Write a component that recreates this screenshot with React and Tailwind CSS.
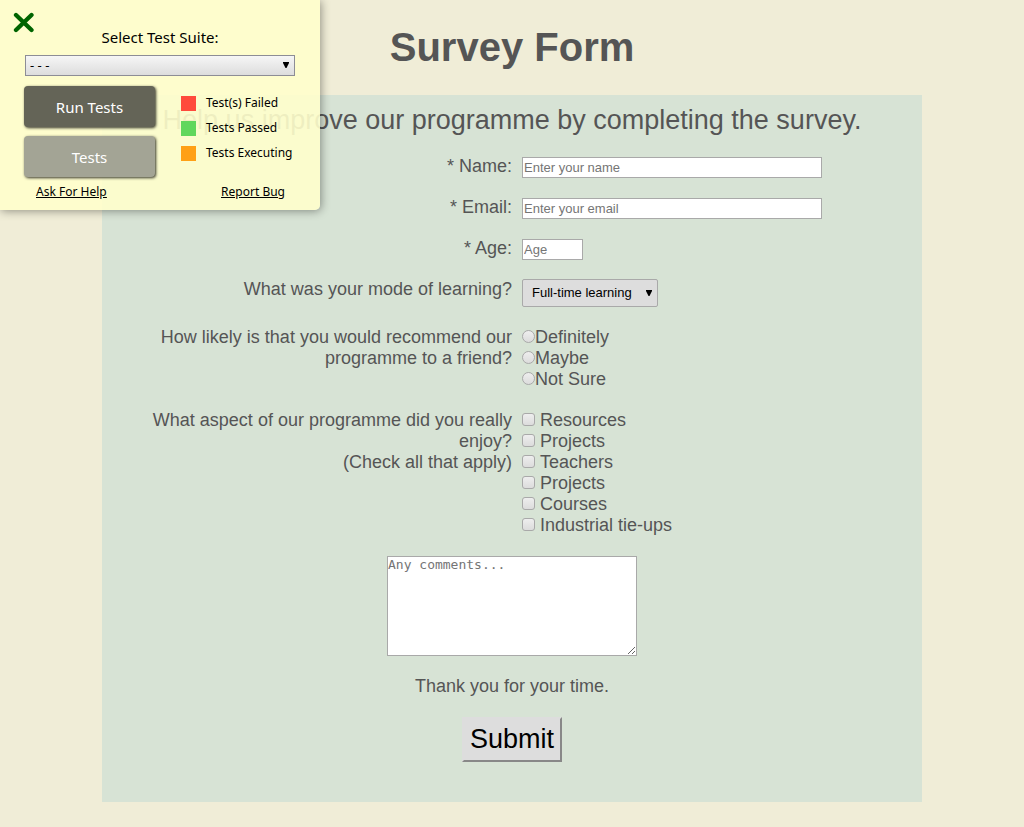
import React from "react";

const aspects = ["Resources", "Projects", "Teachers", "Projects", "Courses", "Industrial tie-ups"];
const likelihoods = ["Definitely", "Maybe", "Not Sure"];
const legend = [
  { label: "Test(s) Failed", color: "bg-[#ff4b3c]" },
  { label: "Tests Passed", color: "bg-[#60d75c]" },
  { label: "Tests Executing", color: "bg-[#ffa015]" },
];

function Arrow({ className }) {
  return (
    <svg viewBox="0 0 6 6" className={"pointer-events-none absolute h-[6px] w-[6px] " + className} aria-hidden="true">
      <path d="M0 0H6V1L3.5 6H2.5L0 1Z" fill="#000" />
    </svg>
  );
}

function Row({ children }) {
  return <div className="grid grid-cols-2 items-start">{children}</div>;
}

function TextRow({ id, label, type, placeholder, width }) {
  return (
    <Row>
      <label htmlFor={id} className="text-right">{label}</label>
      <div className="h-[21px] pl-[10px] pt-px">
        <input
          id={id}
          type={type}
          placeholder={placeholder}
          className={"block h-[21px] max-w-full border border-[#a9a9a9] bg-white px-px text-[13px] leading-4 placeholder:text-[#757575] " + width}
        />
      </div>
    </Row>
  );
}

function TestPanel() {
  return (
    <aside className="absolute left-0 top-0 h-[210px] w-[320px] rounded-br-[5px] bg-[#ffffcc]/90 font-['Noto_Sans',sans-serif] text-black shadow-[1px_1px_10px_rgba(0,0,0,0.4)]">
      <button type="button" aria-label="Close" className="absolute left-[13px] top-[12px]">
        <svg viewBox="0 0 21 21" className="h-[21px] w-[21px]" aria-hidden="true">
          <path d="M3 3L18.500 18M18.500 3L3 18" stroke="#006400" strokeWidth="4.300" strokeLinecap="round" fill="none" />
        </svg>
      </button>
      <div className="flex flex-col px-6 pt-[27px]">
        <label htmlFor="suite" className="text-center text-[15px] leading-[21px]">Select Test Suite:</label>
        <div className="relative mx-px mt-[7px]">
          <select id="suite" className="block h-[21px] w-full appearance-none border border-[#8d8d96] bg-linear-to-b from-[#f6f6f6] to-[#dddddd] px-1 text-[13px] leading-[19px]">
            <option>- - -</option>
          </select>
          <Arrow className="right-[6px] top-[7px]" />
        </div>
        <div className="mt-[10px] flex gap-[26px]">
          <div className="flex w-[131px] flex-col gap-[9px]">
            <button type="button" className="h-[41px] rounded-[4px] bg-[#646457] text-[15px] leading-5 text-white shadow-[1px_1px_3px_rgba(0,0,0,0.8)]">Run Tests</button>
            <button type="button" className="h-[41px] rounded-[4px] bg-[#a3a495] text-[15px] leading-5 text-white shadow-[1px_1px_3px_rgba(0,0,0,0.8)]">Tests</button>
          </div>
          <ul className="flex flex-col gap-[10px] pt-[10px]">
            {legend.map((item) => (
              <li key={item.label} className="flex items-start gap-[10px] whitespace-nowrap text-[12px] leading-[14px]">
                <span className={"h-[15px] w-[15px] " + item.color} />
                {item.label}
              </li>
            ))}
          </ul>
        </div>
        <div className="mt-[7px] flex justify-between pl-3 pr-[11px] text-[12px] leading-4 underline">
          <a href="#help">Ask For Help</a>
          <a href="#bug">Report Bug</a>
        </div>
      </div>
    </aside>
  );
}

export default function App() {
  return (
    <div className="relative min-h-screen bg-[#f0edd7] pb-[25px] pt-[24px] font-['Liberation_Sans',Arial,sans-serif] text-[18px] leading-[21px] text-[#555555]">
      <h1 className="text-center text-[40px] font-bold leading-[46px]">Survey Form</h1>
      <main className="mx-auto mt-[25px] w-4/5 bg-[#d7e3d5] pb-10 pt-[10px]">
        <p className="text-center text-[27px] leading-[31px]">Help us improve our programme by completing the survey.</p>
        <form className="mt-5 flex flex-col gap-5" onSubmit={(e) => e.preventDefault()}>
          <TextRow id="name" type="text" label="* Name:" placeholder="Enter your name" width="w-[300px]" />
          <TextRow id="email" type="email" label="* Email:" placeholder="Enter your email" width="w-[300px]" />
          <TextRow id="age" type="number" label="* Age:" placeholder="Age" width="w-[61px]" />
          <Row>
            <label htmlFor="mode" className="text-right">What was your mode of learning?</label>
            <div className="pl-[10px]">
              <div className="relative w-[136px]">
                <select id="mode" className="block h-7 w-full appearance-none rounded-[2px] border border-[#a9a9a9] bg-[#dddddd] pb-px pl-[9px] text-[13px] text-black">
                  <option>Full-time learning</option>
                  <option>Part-time learning</option>
                </select>
                <Arrow className="right-[6px] top-[11px]" />
              </div>
            </div>
          </Row>
          <Row>
            <p id="likely" className="pl-10 text-right">How likely is that you would recommend our programme to a friend?</p>
            <div role="radiogroup" aria-labelledby="likely" className="flex flex-col pl-[10px]">
              {likelihoods.map((text) => (
                <label key={text} className="flex items-start">
                  <input type="radio" name="likely" className="mt-[3px] h-[13px] w-[13px] appearance-none rounded-full border border-[#a9a9a9] bg-linear-to-b from-[#eeeeee] to-[#dcdcdc] checked:bg-[#555555]" />
                  {text}
                </label>
              ))}
            </div>
          </Row>
          <Row>
            <p id="aspects" className="pl-10 text-right">
              What aspect of our programme did you really enjoy?
              <br />
              (Check all that apply)
            </p>
            <div role="group" aria-labelledby="aspects" className="flex flex-col pl-[10px]">
              {aspects.map((text, i) => (
                <label key={i} className="flex items-start gap-[5px]">
                  <input type="checkbox" className="mt-[3px] h-[13px] w-[13px] appearance-none rounded-[3px] border border-[#a9a9a9] bg-linear-to-b from-[#eeeeee] to-[#dcdcdc] checked:bg-[#555555]" />
                  {text}
                </label>
              ))}
            </div>
          </Row>
          <textarea
            aria-label="Comments"
            placeholder="Any comments..."
            className="mx-auto block h-[100px] w-[250px] resize border border-[#a9a9a9] bg-white font-['DejaVu_Sans_Mono',monospace] text-[13px] leading-4 placeholder:text-[#757575]"
          />
          <p className="text-center">Thank you for your time.</p>
          <button type="submit" className="mx-auto h-[45px] w-[100px] border-2 border-b-[#888888] border-l-[#dddddd] border-r-[#888888] border-t-[#dddddd] bg-[#dddddd] text-[27px] leading-[31px] text-black">
            Submit
          </button>
        </form>
      </main>
      <TestPanel />
    </div>
  );
}
